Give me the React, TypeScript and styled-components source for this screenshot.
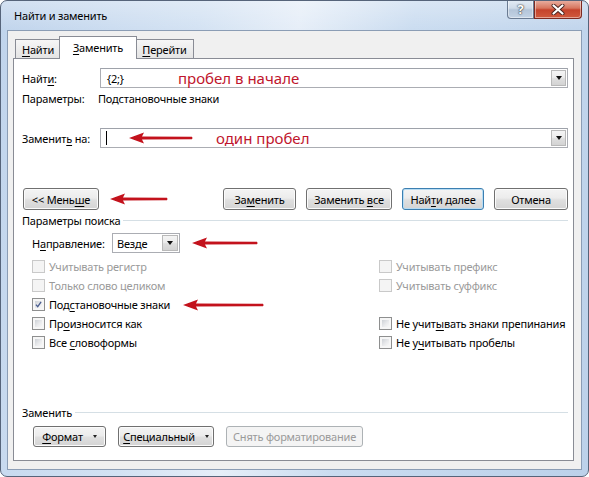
import React from "react";
import styled, { createGlobalStyle } from "styled-components";

const GlobalStyle = createGlobalStyle`
  html, body { margin: 0; padding: 0; }
  body {
    background: #ffffff;
    font-family: "Noto Sans", "DejaVu Sans", sans-serif;
    font-size: 11px;
    letter-spacing: -0.2px;
    color: #000;
  }
  * { box-sizing: border-box; }
`;

const Window = styled.div`
  width: 589px;
  height: 477px;
  display: flex;
  flex-direction: column;
  border: 1px solid #56647a;
  border-radius: 7px;
  padding: 0 6px 6px 6px;
  overflow: hidden;
  background:
    linear-gradient(180deg, rgba(255, 255, 255, 0.3) 0px, rgba(255, 255, 255, 0) 30px),
    linear-gradient(100deg, #c0d4ec 0%, #d3e2f3 30%, #e6eef8 45%, #cadcf0 62%, #bcd1ea 100%);
`;

const TitleBar = styled.div`
  height: 29px;
  flex: none;
  display: flex;
  align-items: center;
  padding-left: 7px;
`;

const Title = styled.div`
  font-size: 11px;
  color: #000;
`;

const Controls = styled.div`
  margin-left: auto;
  align-self: flex-start;
  display: flex;
`;

const CaptionButton = styled.div<{ $w: number; $close?: boolean }>`
  width: ${(p) => p.$w}px;
  height: 19px;
  margin-top: -1px;
  display: flex;
  align-items: center;
  justify-content: center;
  border: 1px solid ${(p) => (p.$close ? "#7d2a22" : "#6a7b92")};
  border-top: none;
  border-radius: ${(p) => (p.$close ? "0 0 4px 0" : "0 0 0 4px")};
  box-shadow: inset 0 0 0 1px rgba(255, 255, 255, 0.45);
  background: ${(p) =>
    p.$close
      ? "linear-gradient(#eab3a6 0%, #d7765f 45%, #c5432c 55%, #d05a3e 100%)"
      : "linear-gradient(#e4ecf5 0%, #cfdbe9 45%, #b4c5d9 55%, #c3d3e5 100%)"};
  color: #fff;
  font-weight: bold;
  font-size: 13px;
  text-shadow: 0 0 2px #333, 0 0 1px #222;
`;

const Client = styled.div`
  flex: 1;
  display: flex;
  flex-direction: column;
  background: #f0f0f0;
  border: 1px solid #8b9db5;
  padding: 5px 7px 8px 5px;
`;

const TabStrip = styled.div`
  height: 23px;
  flex: none;
  display: flex;
  align-items: flex-end;
  padding-left: 2px;
  margin-bottom: -1px;
  position: relative;
  z-index: 1;
`;

const Tab = styled.div<{ $w: number; $active?: boolean }>`
  width: ${(p) => p.$w}px;
  height: ${(p) => (p.$active ? 23 : 19)}px;
  margin: ${(p) => (p.$active ? "0 -2px" : "0 0 1px 0")};
  position: relative;
  z-index: ${(p) => (p.$active ? 2 : 1)};
  display: flex;
  align-items: center;
  justify-content: center;
  padding-bottom: ${(p) => (p.$active ? 2 : 0)}px;
  border: 1px solid #898c95;
  border-bottom: none;
  background: ${(p) => (p.$active ? "#ffffff" : "linear-gradient(#f6f6f6, #e4e4e4)")};
`;

const Panel = styled.div`
  flex: 1;
  display: flex;
  flex-direction: column;
  background: #ffffff;
  border: 1px solid #898c95;
  padding: 9px 5px 13px 8px;
`;

const U = styled.span`
  text-decoration: underline;
  text-underline-offset: 2px;
`;

const FieldRow = styled.div<{ $mt?: number }>`
  height: 20px;
  display: flex;
  align-items: center;
  margin-top: ${(p) => p.$mt ?? 0}px;
`;

const FieldLabel = styled.div<{ $w: number }>`
  width: ${(p) => p.$w}px;
  flex: none;
  white-space: nowrap;
`;

const InfoRow = styled.div`
  height: 16px;
  margin-top: 2px;
  display: flex;
  align-items: center;
`;

const ComboInput = styled.div`
  flex: 1;
  height: 20px;
  display: flex;
  align-items: center;
  background: #ffffff;
  border: 1px solid #abadb3;
  border-top-color: #9ea2aa;
  padding-left: 6px;
  padding-right: 1px;
`;

const Value = styled.span<{ $w: number }>`
  width: ${(p) => p.$w}px;
  flex: none;
`;

const Caret = styled.span`
  width: 1px;
  height: 14px;
  flex: none;
  background: #000;
  margin-left: -1px;
`;

const Note = styled.span<{ $ml?: number }>`
  margin-left: ${(p) => p.$ml ?? 0}px;
  font-size: 15px;
  letter-spacing: 0;
  line-height: 1;
  color: #c0152d;
  white-space: nowrap;
`;

const DropButton = styled.div<{ $w?: number; $h?: number }>`
  margin-left: auto;
  width: ${(p) => p.$w ?? 15}px;
  height: ${(p) => p.$h ?? 16}px;
  flex: none;
  display: flex;
  align-items: center;
  justify-content: center;
  border: 1px solid #b9b9b9;
  background: linear-gradient(#f4f4f4 0%, #ececec 45%, #dedede 55%, #d3d3d3 100%);
`;

const DropArrow = styled.span`
  width: 0;
  height: 0;
  border-left: 3.5px solid transparent;
  border-right: 3.5px solid transparent;
  border-top: 4px solid #111;
`;

const ButtonRow = styled.div`
  height: 22px;
  margin-top: 40px;
  padding-left: 1px;
  display: flex;
  align-items: center;
`;

const ButtonGroup = styled.div`
  margin-left: auto;
  display: flex;
  gap: 10px;
`;

const PushButton = styled.div<{ $w: number; $h?: number; $default?: boolean; $disabled?: boolean }>`
  width: ${(p) => p.$w}px;
  height: ${(p) => p.$h ?? 22}px;
  flex: none;
  display: flex;
  align-items: center;
  justify-content: center;
  gap: 10px;
  border-radius: 3px;
  white-space: nowrap;
  border: 1px solid ${(p) => (p.$disabled ? "#adb2b5" : p.$default ? "#3c7fb1" : "#707070")};
  color: ${(p) => (p.$disabled ? "#9a9a9a" : "#000")};
  background: ${(p) =>
    p.$disabled ? "#f4f4f4" : "linear-gradient(#f4f4f4 0%, #ececec 45%, #dfdfdf 55%, #d4d4d4 100%)"};
  box-shadow: inset 0 0 0 1px ${(p) => (p.$default ? "#b7dcf3" : p.$disabled ? "#f4f4f4" : "#fbfbfb")};
`;

const SmallTriangle = styled.span`
  width: 0;
  height: 0;
  border-left: 2.5px solid transparent;
  border-right: 2.5px solid transparent;
  border-top: 3px solid #222;
`;

const Separator = styled.div<{ $mt?: number }>`
  height: 16px;
  margin-top: ${(p) => p.$mt ?? 0}px;
  display: flex;
  align-items: center;
  gap: 3px;
`;

const SeparatorLine = styled.div`
  flex: 1;
  height: 1px;
  background: #d5dfe5;
`;

const DirectionRow = styled.div`
  height: 20px;
  margin-top: 5px;
  padding-left: 10px;
  display: flex;
  align-items: center;
`;

const Select = styled.div`
  width: 68px;
  height: 20px;
  flex: none;
  display: flex;
  align-items: center;
  padding: 0 1px 0 4px;
  background: #fff;
  border: 1px solid #abadb3;
`;

const OptionsGrid = styled.div`
  margin-top: 4px;
  padding-left: 10px;
  display: grid;
  grid-template-columns: 347px 1fr;
  grid-auto-rows: 19px;
`;

const OptionRow = styled.div<{ $disabled?: boolean }>`
  display: flex;
  align-items: center;
  gap: 4px;
  color: ${(p) => (p.$disabled ? "#9a9a9a" : "#000")};
  white-space: nowrap;
`;

const Box = styled.span<{ $disabled?: boolean }>`
  width: 13px;
  height: 13px;
  flex: none;
  padding: 2px;
  display: flex;
  align-items: center;
  justify-content: center;
  border: 1px solid ${(p) => (p.$disabled ? "#c9c9c9" : "#8e8f8f")};
  background: ${(p) =>
    p.$disabled
      ? "#f4f4f4"
      : "linear-gradient(135deg, #cdd1d6 0%, #e9eaec 55%, #f8f8f8 100%) content-box, #f6f6f6"};
`;

const BottomSection = styled.div`
  margin-top: auto;
  display: flex;
  flex-direction: column;
`;

const BottomButtons = styled.div`
  margin-top: 6px;
  padding-left: 11px;
  display: flex;
  gap: 12px;
`;

const ArrowSvg = styled.svg<{ $ml: number }>`
  flex: none;
  display: block;
  margin-left: ${(p) => p.$ml}px;
`;

function RedArrow({ length, ml }: { length: number; ml: number }) {
  const e = length - 1;
  return (
    <ArrowSvg $ml={ml} width={length} height={12} viewBox={`0 0 ${length} 12`}>
      <path
        d={`M0 6 L15 0.6 L13 4.4 L${e} 4.7 Q${length} 6 ${e} 7.3 L13 7.6 L15 11.4 Z`}
        fill="#c3121c"
      />
    </ArrowSvg>
  );
}

function Check({
  children,
  disabled,
  checked,
}: {
  children: React.ReactNode;
  disabled?: boolean;
  checked?: boolean;
}) {
  return (
    <OptionRow $disabled={disabled}>
      <Box $disabled={disabled}>
        {checked && (
          <svg width="9" height="9" viewBox="0 0 9 9">
            <path d="M1.2 4.6 L3.5 7.2 L7.8 1.2" fill="none" stroke="#4a5d8f" strokeWidth="1.7" />
          </svg>
        )}
      </Box>
      {children}
    </OptionRow>
  );
}

export default function App() {
  return (
    <>
      <GlobalStyle />
      <Window>
        <TitleBar>
          <Title>Найти и заменить</Title>
          <Controls>
            <CaptionButton $w={27}>?</CaptionButton>
            <CaptionButton $w={48} $close>
              <svg width="14" height="11" viewBox="0 0 14 11">
                <path d="M2.5 1.5 L11.5 9.5 M11.5 1.5 L2.5 9.5" stroke="#4a2420" strokeWidth="4" strokeLinecap="round" />
                <path d="M2.5 1.5 L11.5 9.5 M11.5 1.5 L2.5 9.5" stroke="#ffffff" strokeWidth="2.2" strokeLinecap="round" />
              </svg>
            </CaptionButton>
          </Controls>
        </TitleBar>
        <Client>
          <TabStrip>
            <Tab $w={46}>
              <span>
                <U>Н</U>айти
              </span>
            </Tab>
            <Tab $w={78} $active>
              <span>
                <U>З</U>аменить
              </span>
            </Tab>
            <Tab $w={59}>
              <span>
                <U>П</U>ерейти
              </span>
            </Tab>
          </TabStrip>
          <Panel>
            <FieldRow>
              <FieldLabel $w={78}>
                Найт<U>и</U>:
              </FieldLabel>
              <ComboInput>
                <Value $w={71}>{"{2;}"}</Value>
                <Note>пробел в начале</Note>
                <DropButton>
                  <DropArrow />
                </DropButton>
              </ComboInput>
            </FieldRow>
            <InfoRow>
              <FieldLabel $w={76}>Параметры:</FieldLabel>
              <span>Подстановочные знаки</span>
            </InfoRow>
            <FieldRow $mt={22}>
              <FieldLabel $w={78}>
                Заменит<U>ь</U> на:
              </FieldLabel>
              <ComboInput>
                <Caret />
                <RedArrow length={64} ml={22} />
                <Note $ml={23}>один пробел</Note>
                <DropButton>
                  <DropArrow />
                </DropButton>
              </ComboInput>
            </FieldRow>

            <ButtonRow>
              <PushButton $w={76}>
                <span>
                  &lt;&lt; Мень<U>ш</U>е
                </span>
              </PushButton>
              <RedArrow length={58} ml={11} />
              <ButtonGroup>
                <PushButton $w={73}>
                  <span>
                    За<U>м</U>енить
                  </span>
                </PushButton>
                <PushButton $w={86}>
                  <span>
                    Заменить <U>в</U>се
                  </span>
                </PushButton>
                <PushButton $w={82} $default>
                  <span>
                    Най<U>т</U>и далее
                  </span>
                </PushButton>
                <PushButton $w={74}>Отмена</PushButton>
              </ButtonGroup>
            </ButtonRow>

            <Separator $mt={2}>
              <span>Параметры поиска</span>
              <SeparatorLine />
            </Separator>

            <DirectionRow>
              <FieldLabel $w={80}>
                Н<U>а</U>правление:
              </FieldLabel>
              <Select>
                <span>Везде</span>
                <DropButton $w={16} $h={16}>
                  <DropArrow />
                </DropButton>
              </Select>
              <RedArrow length={66} ml={12} />
            </DirectionRow>

            <OptionsGrid>
              <Check disabled>Учитывать регистр</Check>
              <Check disabled>Учитывать префикс</Check>
              <Check disabled>Только слово целиком</Check>
              <Check disabled>Учитывать суффикс</Check>
              <Check checked>
                <span>
                  Под<U>с</U>тановочные знаки
                </span>
                <RedArrow length={81} ml={9} />
              </Check>
              <div />
              <Check>
                <span>
                  Пр<U>о</U>износится как
                </span>
              </Check>
              <Check>
                <span>
                  Не учит<U>ы</U>вать знаки препинания
                </span>
              </Check>
              <Check>
                <span>
                  Все <U>с</U>ловоформы
                </span>
              </Check>
              <Check>
                <span>
                  Не у<U>ч</U>итывать пробелы
                </span>
              </Check>
            </OptionsGrid>

            <BottomSection>
              <Separator>
                <span>Заменить</span>
                <SeparatorLine />
              </Separator>
              <BottomButtons>
                <PushButton $w={73} $h={21}>
                  <span>
                    <U>Ф</U>ормат
                  </span>
                  <SmallTriangle />
                </PushButton>
                <PushButton $w={96} $h={21}>
                  <span>
                    <U>С</U>пециальный
                  </span>
                  <SmallTriangle />
                </PushButton>
                <PushButton $w={137} $h={21} $disabled>
                  Снять форматирование
                </PushButton>
              </BottomButtons>
            </BottomSection>
          </Panel>
        </Client>
      </Window>
    </>
  );
}
